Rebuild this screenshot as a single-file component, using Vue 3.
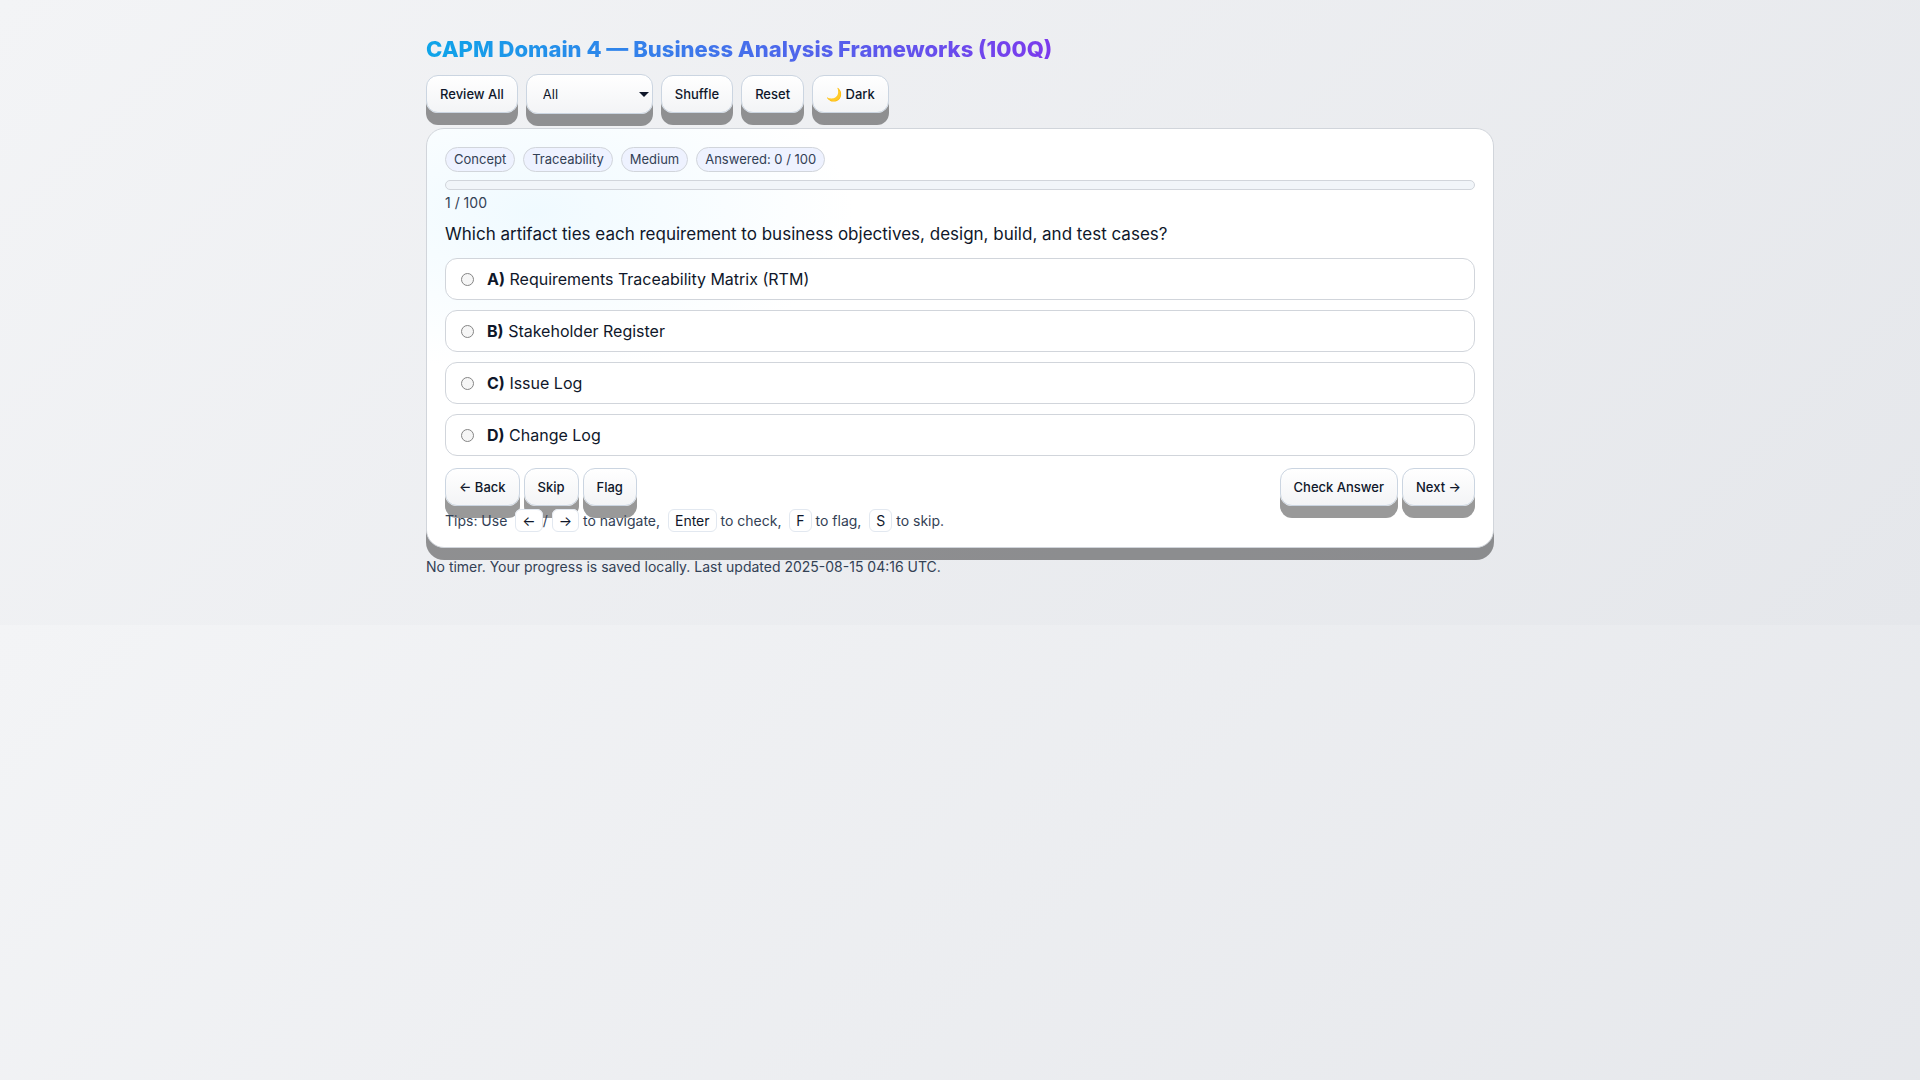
<script setup>
import { ref } from 'vue'

const filters = ['All', 'Concept', 'Scenario', 'Flagged']
const filter = ref('All')
const tags = ['Concept', 'Traceability', 'Medium', 'Answered: 0 / 100']
const options = [
  { key: 'A', text: 'Requirements Traceability Matrix (RTM)' },
  { key: 'B', text: 'Stakeholder Register' },
  { key: 'C', text: 'Issue Log' },
  { key: 'D', text: 'Change Log' },
]
const choice = ref('')
const progress = ref(0)
</script>

<template>
  <div class="wrap">
    <header>
      <h1>CAPM Domain 4 — Business Analysis Frameworks (100Q)</h1>
      <div class="toolbar">
        <button type="button" class="btn">Review All</button>
        <div class="select">
          <select v-model="filter" class="filter" aria-label="Question filter">
            <option v-for="f in filters" :key="f">{{ f }}</option>
          </select>
        </div>
        <button type="button" class="btn">Shuffle</button>
        <button type="button" class="btn">Reset</button>
        <button type="button" class="btn">🌙 Dark</button>
      </div>
    </header>

    <main class="card">
      <div class="tags">
        <span v-for="t in tags" :key="t" class="tag">{{ t }}</span>
      </div>
      <div class="bar"><div class="fill" :style="{ width: progress + '%' }"></div></div>
      <div class="count">1 / 100</div>
      <h2 id="question">Which artifact ties each requirement to business objectives, design, build, and test cases?</h2>
      <div class="options" role="radiogroup" aria-labelledby="question">
        <label v-for="o in options" :key="o.key" class="option">
          <input v-model="choice" type="radio" name="answer" :value="o.key" />
          <span><strong>{{ o.key }})</strong> {{ o.text }}</span>
        </label>
      </div>
      <div class="actions">
        <div class="group">
          <button type="button" class="btn">← Back</button>
          <button type="button" class="btn">Skip</button>
          <button type="button" class="btn">Flag</button>
        </div>
        <div class="group">
          <button type="button" class="btn">Check Answer</button>
          <button type="button" class="btn">Next →</button>
        </div>
      </div>
      <p class="tips">Tips: Use <kbd>←</kbd>/<kbd>→</kbd> to navigate, <kbd>Enter</kbd> to check, <kbd>F</kbd> to flag, <kbd>S</kbd> to skip.</p>
    </main>

    <footer>No timer. Your progress is saved locally. Last updated 2025-08-15 04:16 UTC.</footer>
  </div>
</template>

<style>
body {
  margin: 0;
  background: linear-gradient(135deg, #f3f4f6, #e5e7eb);
  color: #0f172a;
  font-family: Inter, "Noto Sans", sans-serif;
  font-size: 16px;
}
</style>

<style scoped>
.wrap {
  box-sizing: border-box;
  max-width: 1100px;
  margin: 0 auto;
  padding: 32px 16px 48px;
}
h1 {
  width: fit-content;
  margin: 0;
  font-size: 22px;
  line-height: 34px;
  font-weight: 800;
  color: transparent;
  background: linear-gradient(90deg, #0ea5e9, #7c3aed);
  background-clip: text;
}
.toolbar {
  display: flex;
  flex-wrap: wrap;
  align-items: center;
  gap: 8px;
  margin: 8px 0 14px;
}
.btn,
.filter {
  box-sizing: border-box;
  height: 38px;
  border: 1px solid #cbd5e1;
  border-radius: 12px;
  background: linear-gradient(180deg, #ffffff, #f3f4f6);
  box-shadow: 0 12px 0 rgba(0, 0, 0, 0.4);
  color: #0f172a;
  font-family: inherit;
  font-size: 13px;
  cursor: pointer;
}
.btn {
  padding: 0 13px;
  font-weight: 500;
}
.select {
  position: relative;
}
.select::after {
  content: "";
  position: absolute;
  top: 18px;
  right: 4px;
  border: 5px solid transparent;
  border-top-color: #0f172a;
  border-bottom-width: 0;
  pointer-events: none;
}
.filter {
  display: block;
  width: 127px;
  height: 40px;
  padding: 0 16px;
  appearance: none;
}
.card {
  padding: 18px;
  border: 1px solid #d1d5db;
  border-radius: 18px;
  background: radial-gradient(400px 200px at 10% 20%, #f0faff, transparent 80%), #ffffff;
  box-shadow: 0 12px 0 rgba(0, 0, 0, 0.4);
}
.tags {
  display: flex;
  flex-wrap: wrap;
  gap: 8px;
}
.tag {
  padding: 0 8px;
  border: 1px solid #d1d5db;
  border-radius: 999px;
  background: #eef2ff;
  color: #334155;
  font-size: 13px;
  line-height: 23px;
}
.bar {
  height: 8px;
  margin-top: 8px;
  border: 1px solid #d1d5db;
  border-radius: 999px;
  background: #f1f5f9;
  overflow: hidden;
}
.fill {
  height: 100%;
  background: #0ea5e9;
}
.count {
  color: #334155;
  font-size: 14px;
  line-height: 26px;
}
h2 {
  margin: 4px 0 10px;
  font-size: 17px;
  line-height: 28px;
  font-weight: 400;
}
.options {
  display: grid;
  gap: 10px;
}
.option {
  display: flex;
  align-items: center;
  gap: 13px;
  padding: 0 15px;
  border: 1px solid #d1d5db;
  border-radius: 12px;
  background: #ffffff;
  line-height: 40px;
}
.option input {
  box-sizing: border-box;
  width: 13px;
  height: 13px;
  margin: 0;
  border: 1px solid #858585;
  border-radius: 50%;
  background: #f6f6f6;
  appearance: none;
}
.option input:checked {
  border: 4px solid #0ea5e9;
}
.actions {
  display: flex;
  flex-wrap: wrap;
  justify-content: space-between;
  margin-top: 12px;
}
.group {
  display: flex;
  gap: 4px;
}
.tips {
  margin: 7px 0 0;
  color: #334155;
  font-size: 14px;
  line-height: 16px;
}
kbd {
  margin-left: 4px;
  padding: 2px 6px;
  border: 1px solid #e2e8f0;
  border-radius: 6px;
  background: #ffffff;
  color: #0f172a;
  font-family: inherit;
}
footer {
  margin-top: 8px;
  color: #334155;
  font-size: 14px;
  line-height: 21px;
}
</style>
